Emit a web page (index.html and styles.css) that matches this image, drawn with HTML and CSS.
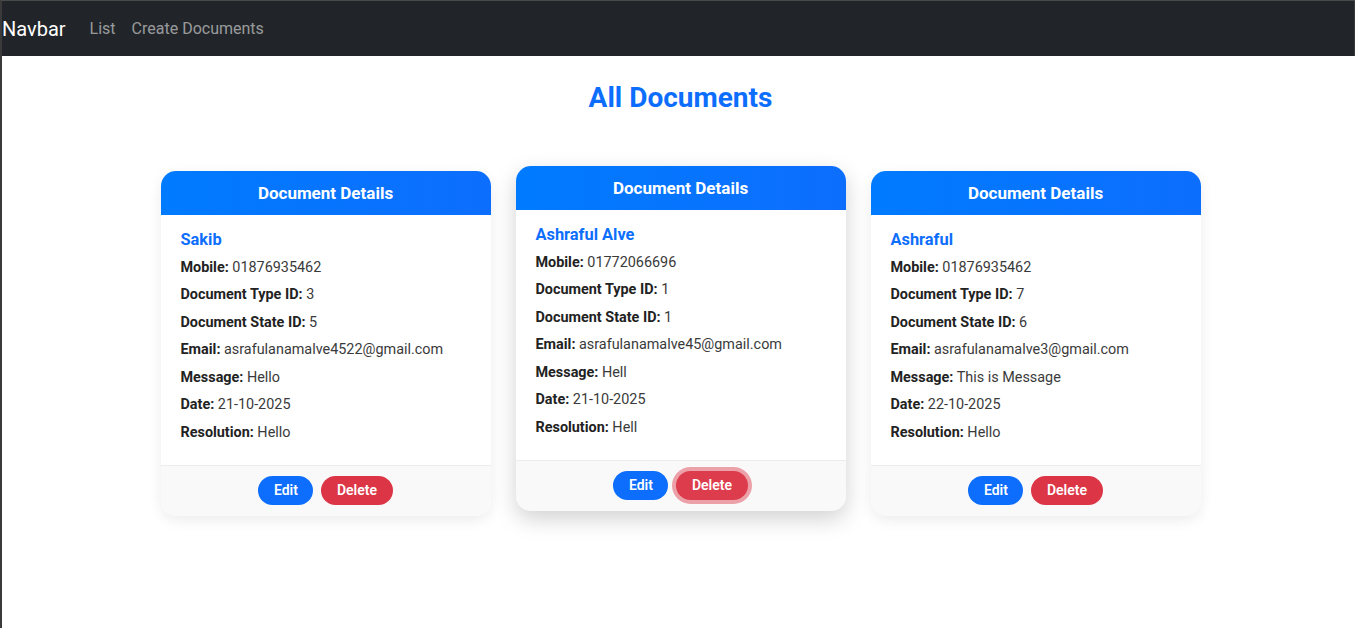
FILE: index.html
```html
<!DOCTYPE html>
<html lang="en">
<head>
<meta charset="utf-8">
<title>All Documents</title>
<link rel="stylesheet" href="styles.css">
</head>
<body>
<div class="frame">
  <nav class="navbar">
    <a class="brand" href="#">Navbar</a>
    <a class="nav-link" href="#">List</a>
    <a class="nav-link" href="#">Create Documents</a>
  </nav>
  <main class="page">
    <h2 class="page-title">All Documents</h2>
    <div class="cards">
      <div class="card">
        <div class="card-header">Document Details</div>
        <div class="card-body">
          <h5 class="name">Sakib</h5>
          <p><b>Mobile:</b> 01876935462</p>
          <p><b>Document Type ID:</b> 3</p>
          <p><b>Document State ID:</b> 5</p>
          <p><b>Email:</b> asrafulanamalve4522@gmail.com</p>
          <p><b>Message:</b> Hello</p>
          <p><b>Date:</b> 21-10-2025</p>
          <p><b>Resolution:</b> Hello</p>
        </div>
        <div class="card-footer">
          <button class="btn btn-edit">Edit</button>
          <button class="btn btn-delete">Delete</button>
        </div>
      </div>
      <div class="card card-hover">
        <div class="card-header">Document Details</div>
        <div class="card-body">
          <h5 class="name">Ashraful Alve</h5>
          <p><b>Mobile:</b> 01772066696</p>
          <p><b>Document Type ID:</b> 1</p>
          <p><b>Document State ID:</b> 1</p>
          <p><b>Email:</b> asrafulanamalve45@gmail.com</p>
          <p><b>Message:</b> Hell</p>
          <p><b>Date:</b> 21-10-2025</p>
          <p><b>Resolution:</b> Hell</p>
        </div>
        <div class="card-footer">
          <button class="btn btn-edit">Edit</button>
          <button class="btn btn-delete btn-focus">Delete</button>
        </div>
      </div>
      <div class="card">
        <div class="card-header">Document Details</div>
        <div class="card-body">
          <h5 class="name">Ashraful</h5>
          <p><b>Mobile:</b> 01876935462</p>
          <p><b>Document Type ID:</b> 7</p>
          <p><b>Document State ID:</b> 6</p>
          <p><b>Email:</b> asrafulanamalve3@gmail.com</p>
          <p><b>Message:</b> This is Message</p>
          <p><b>Date:</b> 22-10-2025</p>
          <p><b>Resolution:</b> Hello</p>
        </div>
        <div class="card-footer">
          <button class="btn btn-edit">Edit</button>
          <button class="btn btn-delete">Delete</button>
        </div>
      </div>
    </div>
  </main>
</div>
</body>
</html>
```
FILE: styles.css
```css
* { box-sizing: border-box; }
html, body { margin: 0; padding: 0; height: 100%; }
body {
  font-family: Roboto, "Liberation Sans", sans-serif;
  background: #ffffff;
  color: #212529;
}
.frame {
  height: 628px;
  border-left: 2px solid #3a3a3a;
  border-top: 1px solid #4a4a4a;
  overflow: hidden;
}
.navbar {
  display: flex;
  align-items: center;
  height: 55px;
  background: #212529;
  border-right: 1px solid #3a3a3a;
}
.brand {
  color: #ffffff;
  font-size: 20px;
  text-decoration: none;
  margin-right: 16px;
  line-height: 30px;
}
.nav-link {
  color: rgba(255,255,255,0.55);
  font-size: 16px;
  line-height: 24px;
  padding: 8px;
  text-decoration: none;
}
.page {
  padding: 25px 0 0 4px;
}
.page-title {
  margin: 0 0 56px;
  text-align: center;
  color: #0d6efd;
  font-size: 28px;
  font-weight: 700;
  line-height: 34px;
}
.cards {
  display: flex;
  justify-content: center;
  gap: 25px;
}
.card {
  width: 330px;
  background: #fff;
  border-radius: 15px;
  overflow: hidden;
  box-shadow: 0 4px 14px rgba(0,0,0,0.08);
}
.card-hover {
  transform: translateY(-5px);
  box-shadow: 0 8px 22px rgba(0,0,0,0.18);
}
.card-header {
  background: linear-gradient(90deg, #007bff, #0d6efd);
  color: #fff;
  text-align: center;
  font-weight: 700;
  font-size: 17px;
  line-height: 20px;
  padding: 12px;
}
.card-body {
  padding: 15px 20px 16px;
}
.name {
  margin: 0 0 7.5px;
  color: #0d6efd;
  font-size: 16.4px;
  font-weight: 700;
  line-height: 19px;
}
.card-body p {
  margin: 0 0 6.5px;
  font-size: 14.4px;
  line-height: 21px;
  color: #3a3a3a;
}
.card-body p b {
  color: #222;
  font-weight: 700;
}
.card-footer {
  display: flex;
  justify-content: center;
  gap: 8px;
  padding: 10px 0 11px;
  background: #f9f9f9;
  border-top: 1px solid #ececec;
}
.btn {
  border: none;
  border-radius: 20px;
  color: #fff;
  font-family: Roboto, "Liberation Sans", sans-serif;
  font-size: 14px;
  font-weight: 600;
  line-height: 19px;
  padding: 5px 16px;
}
.btn-edit { background: #0d6efd; padding: 5px 15.5px; }
.btn-delete { background: #dc3545; padding: 5px 15.5px; }
.btn-focus {
  background: #dd3c4c;
  box-shadow: 0 0 0 4px rgba(220,53,69,0.45);
}
```
